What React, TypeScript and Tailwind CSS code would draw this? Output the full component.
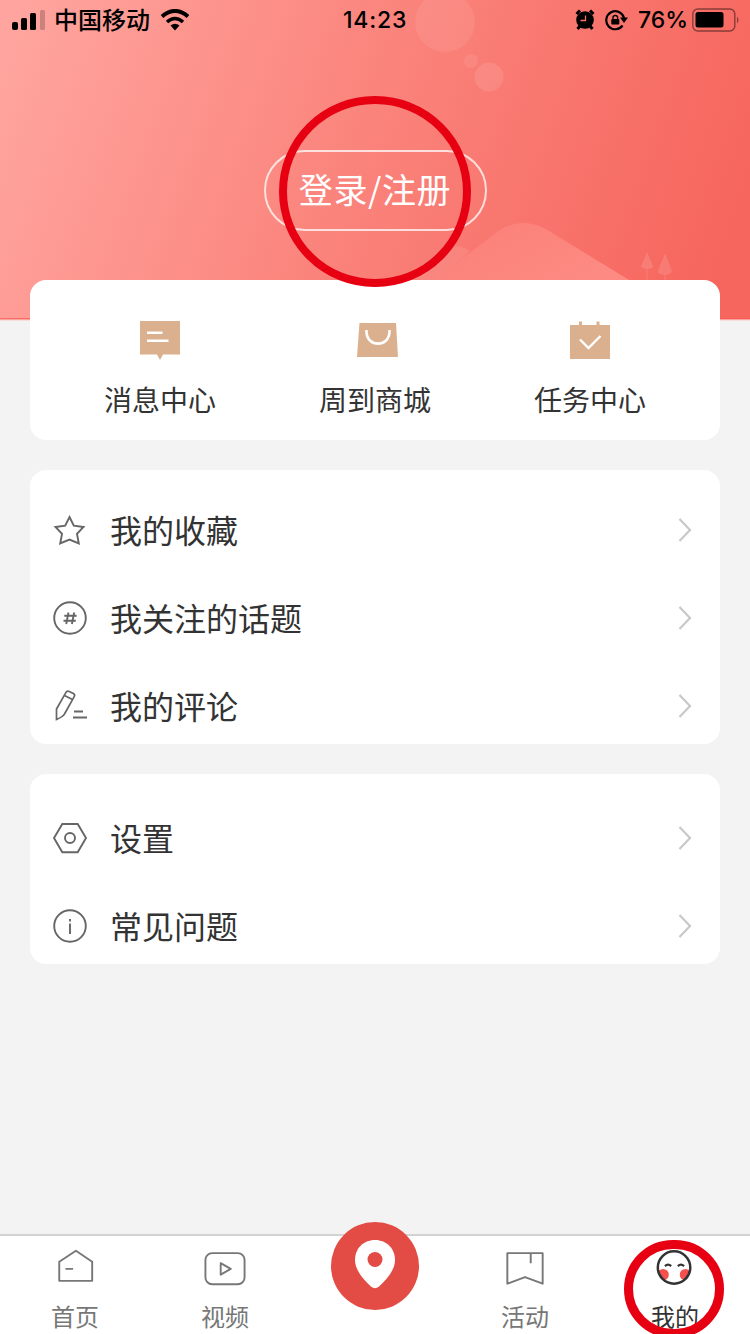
import type { ReactNode } from "react";

interface MenuItem {
  label: string;
  icon: ReactNode;
}

function HeaderScene() {
  return (
    <svg className="absolute inset-0" width="750" height="321" viewBox="0 0 750 321">
      <defs>
        <linearGradient id="sky" gradientUnits="userSpaceOnUse" x1="30" y1="0" x2="720" y2="250">
          <stop offset="0" stopColor="#ffa49e" />
          <stop offset="0.5" stopColor="#fa837b" />
          <stop offset="1" stopColor="#f6665e" />
        </linearGradient>
        <linearGradient id="hill" x1="0" y1="0" x2="1" y2="0.6">
          <stop offset="0" stopColor="#fa7f77" />
          <stop offset="1" stopColor="#fd8b83" />
        </linearGradient>
      </defs>
      <rect width="750" height="320" fill="url(#sky)" />
      <circle cx="445" cy="22" r="30" fill="#fff" fillOpacity="0.08" />
      <circle cx="471" cy="61" r="7" fill="#fff" fillOpacity="0.08" />
      <circle cx="489" cy="77" r="14.5" fill="#fff" fillOpacity="0.1" />
      <path d="M398 283 L440 253 Q456 241 470 251 L434 283 Z" fill="#fff" fillOpacity="0.09" />
      <path d="M430 283 L500 230 Q520 217 544 228 L634 283 Z" fill="url(#hill)" />
      <g fill="#fff" fillOpacity="0.12">
        <path d="M647 252 L653 266 Q653 269 647 269 Q641 269 641 266 Z M646.3 269 h1.2 v11 h-1.2 Z" />
        <path d="M665 253 L672 271 Q671 275 665 275 Q658 275 658 271 Z M664.3 275 h1.2 v5 h-1.2 Z" />
      </g>
      <rect y="318" width="750" height="1" fill="#f45a52" fillOpacity="0.7" />
      <rect y="319" width="750" height="1" fill="#f8a39d" />
      <rect y="320" width="750" height="1" fill="#f6dedc" />
    </svg>
  );
}

function StatusBar() {
  return (
    <div className="relative grid h-10 grid-cols-3 items-center text-black">
      <div className="flex items-center pl-3">
        <svg width="34" height="20" viewBox="0 0 34 20">
          <rect x="0" y="12" width="6" height="8" rx="2" />
          <rect x="9" y="8" width="6" height="12" rx="1.5" />
          <rect x="18" y="3" width="6" height="17" rx="1.5" />
          <rect x="28" y="0" width="5" height="20" rx="1.5" fillOpacity="0.2" />
        </svg>
        <span className="ml-2 pb-0.5 text-2xl leading-[38px] font-medium">中国移动</span>
        <svg className="ml-2.5" width="30" height="22" viewBox="0 0 30 22" fill="none" stroke="#000">
          <path d="M2 7.5 Q15 -3.5 28 7.5" strokeWidth="4" />
          <path d="M7 13 Q15 6 23 13" strokeWidth="3.6" />
          <path d="M10.5 16.5 Q15 12.8 19.5 16.5 L15 21.5 Z" fill="#000" stroke="none" />
        </svg>
      </div>
      <span className="text-center font-[Inter] text-[23px] font-medium tracking-[0.8px]">14:23</span>
      <div className="flex items-center justify-end pr-2.5">
        <svg width="20" height="22" viewBox="0 0 20 22">
          <circle cx="10" cy="11" r="8.8" />
          <path d="M1.5 5 L5 1.5 M18.5 5 L15 1.5 M5 17 L2.5 20 M15 17 L17.5 20" stroke="#000" strokeWidth="3" />
          <path d="M10.5 6.5 V11.5 H5.5" fill="none" stroke="#f9736b" strokeWidth="1.3" />
        </svg>
        <svg className="ml-2.5" width="23" height="22" viewBox="0 0 23 22">
          <path d="M17.6 16.5 A9 9 0 1 1 19 9" fill="none" stroke="#000" strokeWidth="2.2" />
          <path d="M15 8.5 H23 L19 14 Z" />
          <rect x="6.3" y="10" width="8" height="5.6" rx="0.8" />
          <path d="M8 10.5 V8.6 Q8 6.5 10.3 6.5 Q12.6 6.5 12.6 8.6 V10.5" fill="none" stroke="#000" strokeWidth="1.4" />
        </svg>
        <span className="ml-2.5 font-[Inter] text-[23px] font-medium">76%</span>
        <svg className="ml-1" width="48" height="24" viewBox="0 0 48 24">
          <rect x="0.8" y="1" width="42" height="22" rx="5" fill="none" stroke="#000" strokeOpacity="0.45" strokeWidth="1.4" />
          <rect x="3.5" y="4" width="28" height="15.5" rx="2.5" />
          <path d="M45 8.5 Q48 12 45 15.5 Z" fillOpacity="0.45" />
        </svg>
      </div>
    </div>
  );
}

const shortcuts: MenuItem[] = [
  {
    label: "消息中心",
    icon: (
      <svg width="44" height="44" viewBox="0 0 44 44">
        <path d="M2 3 H42 V36.5 H25 L22 42 L19 36.5 H2 Z" fill="#dbb08e" />
        <path d="M9 14.7 H24.5 M9 22.7 H30.5" stroke="#fff" strokeWidth="2.4" />
      </svg>
    ),
  },
  {
    label: "周到商城",
    icon: (
      <svg className="translate-x-[3px]" width="44" height="44" viewBox="0 0 44 44">
        <path d="M3.5 5 H40 L42 39 H1 Z" fill="#dbb08e" />
        <path d="M10.5 12 V14 C11 29.5 33 29.5 33.5 14 V12" fill="none" stroke="#fff" strokeWidth="2.6" />
      </svg>
    ),
  },
  {
    label: "任务中心",
    icon: (
      <svg width="44" height="44" viewBox="0 0 44 44">
        <path d="M2 7 H11 V3.5 H14 V7 H28.5 V3.5 H31.5 V7 H42 V41 H2 Z" fill="#dbb08e" />
        <path d="M12 21.5 L20.5 30 L32.5 18" fill="none" stroke="#fff" strokeWidth="2.4" />
      </svg>
    ),
  },
];

const lineIcon = {
  width: 36,
  height: 36,
  viewBox: "0 0 36 36",
  fill: "none",
  stroke: "#666",
  strokeWidth: 1.9,
};

const personalItems: MenuItem[] = [
  {
    label: "我的收藏",
    icon: (
      <svg {...lineIcon}>
        <path d="M17.5 5 L21.8 13.6 L31.5 15 L25 21.8 L26.8 31.5 L17.5 27.6 L8.2 31.5 L10 21.8 L3.5 15 L13.2 13.6 Z" />
      </svg>
    ),
  },
  {
    label: "我关注的话题",
    icon: (
      <svg {...lineIcon}>
        <circle cx="18" cy="18" r="15.8" />
        <path d="M16.5 12.5 L14.2 24 M22.2 12.5 L19.9 24 M12.3 15.8 H24.6 M11.5 20.8 H23.8" />
      </svg>
    ),
  },
  {
    label: "我的评论",
    icon: (
      <svg {...lineIcon} strokeWidth={1.7}>
        <path d="M4.5 21 L14 4.4 Q15.2 2.4 17.2 3.4 L21.4 5.4 Q23.4 6.6 22.2 8.6 L12.8 25.5 Q11.5 28.5 4.5 31.5 Z M12.5 7.5 L20.5 11.5" />
        <path d="M22 23.5 H31 M21 29.5 H35" strokeWidth="2" />
      </svg>
    ),
  },
];

const supportItems: MenuItem[] = [
  {
    label: "设置",
    icon: (
      <svg {...lineIcon}>
        <path d="M10.3 4 H25.7 L34 18 L25.7 32.3 H10.3 L2 18 Z" />
        <circle cx="18" cy="18" r="5" />
      </svg>
    ),
  },
  {
    label: "常见问题",
    icon: (
      <svg {...lineIcon}>
        <circle cx="18" cy="18" r="15.8" />
        <path d="M18 11 V13.5 M18 15.5 V26" />
      </svg>
    ),
  },
];

function MenuRow({ label, icon }: MenuItem) {
  return (
    <div className="flex h-[76px] items-center">
      {icon}
      <span className="ml-[22px] flex-1 pb-0.5 text-[32px] leading-none text-[#333]">{label}</span>
      <svg className="mr-1.5" width="14" height="28" viewBox="0 0 14 28" fill="none" stroke="#c8c8c8" strokeWidth="2.2">
        <path d="M1.5 3 L12 14 L1.5 25" />
      </svg>
    </div>
  );
}

const leftTabs: MenuItem[] = [
  {
    label: "首页",
    icon: (
      <svg width="44" height="44" viewBox="0 0 44 44" fill="none" stroke="#777" strokeWidth="2" strokeLinejoin="round">
        <path d="M5.5 16.5 L23 5 L40 16.5 V36.5 H5.5 Z M12 24 H20" />
      </svg>
    ),
  },
  {
    label: "视频",
    icon: (
      <svg width="44" height="44" viewBox="0 0 44 44" fill="none" stroke="#777" strokeWidth="2" strokeLinejoin="round">
        <rect x="1.5" y="7.5" width="41" height="32.5" rx="7" />
        <path d="M17.5 18 L28 24 L17.5 30 Z" />
      </svg>
    ),
  },
];

const rightTabs: MenuItem[] = [
  {
    label: "活动",
    icon: (
      <svg width="44" height="44" viewBox="0 0 44 44" fill="none" stroke="#777" strokeWidth="2" strokeLinejoin="round">
        <path d="M3.5 7.5 H40.5 V39.5 L22 32.5 L3.5 39.5 Z M28 7.5 V18" />
      </svg>
    ),
  },
];

function Tab({ label, icon, active }: MenuItem & { active?: boolean }) {
  return (
    <div className="flex w-[150px] flex-col items-center pt-2.5">
      {icon}
      <span className={`mt-2.5 text-2xl leading-9 ${active ? "text-[#333]" : "text-[#777]"}`}>{label}</span>
    </div>
  );
}

function TabBar() {
  return (
    <nav className="relative flex h-[100px] border-t-2 border-[#d2d2d2] bg-white">
      {leftTabs.map((t) => (
        <Tab key={t.label} {...t} />
      ))}
      <div className="flex w-[150px] justify-center">
        <div className="-mt-3.5 flex size-[88px] items-center justify-center rounded-full bg-[#e24c45] pb-1">
          <svg width="42" height="52" viewBox="0 0 42 52">
            <path d="M21 2 C9 2 1 11 1 22 C1 32 9 41 17 48.5 Q21 52 25 48.5 C33 41 41 32 41 22 C41 11 33 2 21 2 Z" fill="#fff" />
            <circle cx="21" cy="21.5" r="7.5" fill="#e24c45" />
          </svg>
        </div>
      </div>
      {rightTabs.map((t) => (
        <Tab key={t.label} {...t} />
      ))}
      <Tab
        label="我的"
        active
        icon={
          <svg width="44" height="44" viewBox="0 0 44 44" fill="none">
            <defs>
              <clipPath id="face">
                <circle cx="21" cy="22.5" r="17" />
              </clipPath>
            </defs>
            <g clipPath="url(#face)" fill="#f5504e">
              <circle cx="9.5" cy="30" r="6" />
              <circle cx="33" cy="30" r="6" />
            </g>
            <circle cx="21" cy="22.5" r="17" stroke="#333" strokeWidth="2.6" />
            <path d="M11.5 21 Q14.7 18 18 21 M25 21 Q28.2 18 31.5 21" stroke="#333" strokeWidth="2.4" />
          </svg>
        }
      />
      {/* highlight ring */}
      <div className="absolute top-1 left-[624px] h-[98px] w-[100px] rounded-full border-[9px] border-[#e60012]" />
    </nav>
  );
}

export default function App() {
  return (
    <div className="flex h-[1334px] w-[750px] flex-col overflow-hidden bg-[#f3f3f3] font-['Noto_Sans_CJK_SC',sans-serif]">
      <header className="relative h-[320px] shrink-0">
        <HeaderScene />
        <StatusBar />
        <div className="relative mt-[109.5px] flex justify-center">
          <button className="h-[81px] w-[223px] rounded-full border-[2.5px] border-white/75 pb-0.5 text-[34px] leading-none tracking-[0.6px] text-white">
            登录/注册
          </button>
        </div>
      </header>

      <main className="relative -mt-10 flex flex-1 flex-col gap-[30px] px-[30px]">
        <section className="flex h-40 shrink-0 justify-center rounded-2xl bg-white">
          {shortcuts.map((s) => (
            <div key={s.label} className="flex w-[215px] flex-col items-center pt-[38px]">
              {s.icon}
              <span className="mt-4 text-[28px] leading-[42px] text-[#333]">{s.label}</span>
            </div>
          ))}
        </section>

        <section className="flex flex-col gap-3 rounded-2xl bg-white px-[22px] pt-[22px]">
          {personalItems.map((m) => (
            <MenuRow key={m.label} {...m} />
          ))}
        </section>

        <section className="flex flex-col gap-3 rounded-2xl bg-white px-[22px] pt-[26px]">
          {supportItems.map((m) => (
            <MenuRow key={m.label} {...m} />
          ))}
        </section>

        {/* highlight ring around the login button */}
        <div className="absolute -top-[184px] left-[279px] h-[191px] w-[192px] rounded-full border-[8.5px] border-[#e60012]" />
      </main>

      <TabBar />
    </div>
  );
}
